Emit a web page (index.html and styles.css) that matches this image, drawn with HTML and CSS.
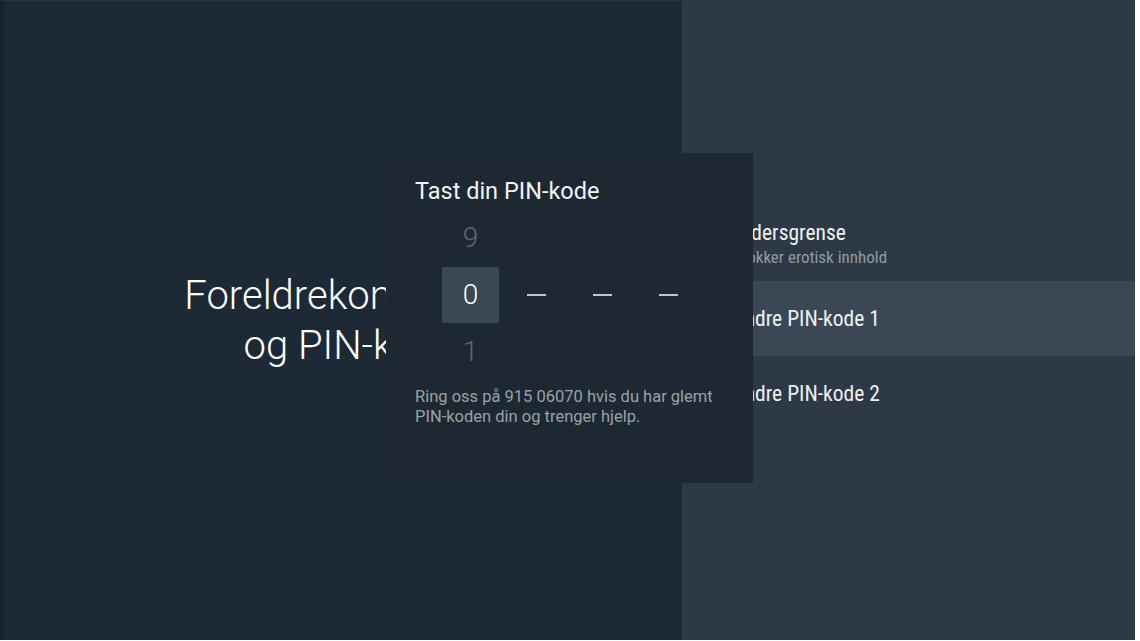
FILE: index.html
```html
<!DOCTYPE html>
<html lang="no">
<head>
<meta charset="utf-8">
<title>Foreldrekontroll og PIN-kode</title>
<link rel="stylesheet" href="styles.css">
</head>
<body>
<div class="frame">
  <div class="screen">
    <section class="guidance">
      <h1 class="guidance-title">Foreldrekontroll<br>og PIN-kode</h1>
    </section>
    <section class="actions">
      <ul class="action-list">
        <li class="action">
          <span class="action-title">Aldersgrense</span>
          <span class="action-desc">Blokker erotisk innhold</span>
        </li>
        <li class="action action-focused">
          <span class="action-title">Endre PIN-kode 1</span>
        </li>
        <li class="action">
          <span class="action-title">Endre PIN-kode 2</span>
        </li>
      </ul>
    </section>
    <div class="dialog">
      <h2 class="dialog-title">Tast din PIN-kode</h2>
      <div class="picker">
        <div class="pick-col">
          <span class="digit digit-dim">9</span>
          <span class="digit digit-active">0</span>
          <span class="digit digit-dim">1</span>
        </div>
        <div class="pick-col"><span class="dash"></span></div>
        <div class="pick-col"><span class="dash"></span></div>
        <div class="pick-col"><span class="dash"></span></div>
      </div>
      <p class="dialog-help">Ring oss på 915 06070 hvis du har glemt<br>PIN-koden din og trenger hjelp.</p>
    </div>
  </div>
</div>
</body>
</html>
```

FILE: styles.css
```css
* { box-sizing: border-box; }
html, body {
  margin: 0;
  padding: 0;
  background: #ffffff;
  font-family: Roboto, "Noto Sans", "Liberation Sans", sans-serif;
}
.frame {
  width: 1135px;
  height: 640px;
  border-left: 4px solid #17212a;
  border-top: 1px solid #2a3540;
  overflow: hidden;
}
.screen {
  position: relative;
  display: flex;
  width: 100%;
  height: 100%;
}
.guidance {
  width: 678px;
  flex: none;
  background: #1d2934;
  display: flex;
  align-items: center;
  justify-content: flex-end;
  padding-right: 224px;
}
.guidance-title {
  margin: 0;
  font-weight: 300;
  font-size: 40px;
  line-height: 50px;
  color: #ffffff;
  text-align: right;
  white-space: nowrap;
}
.actions {
  flex: 1;
  background: #2d3944;
  display: flex;
  align-items: center;
  padding-bottom: 4px;
}
.action-list {
  list-style: none;
  margin: 0;
  padding: 0;
  width: 100%;
}
.action {
  height: 75px;
  padding-left: 52px;
  display: flex;
  flex-direction: column;
  justify-content: center;
  font-family: "Roboto Condensed", Roboto, sans-serif;
}
.action-focused {
  background: #3a4855;
}
.action-title {
  font-size: 21.5px;
  line-height: 24px;
  color: #eef1f3;
}
.action-desc {
  margin-top: 2px;
  font-size: 17px;
  line-height: 20px;
  color: #929ba3;
}
.dialog {
  position: absolute;
  left: 382px;
  top: 152px;
  width: 367px;
  height: 330px;
  background: #1d2833;
  padding: 24px 0 0 29px;
}
.dialog-title {
  margin: 0;
  font-weight: 400;
  font-size: 23.5px;
  line-height: 28px;
  color: #f2f4f5;
}
.picker {
  display: flex;
  gap: 9px;
  margin: 4px 0 0 27px;
}
.pick-col {
  width: 57px;
  display: grid;
  grid-template-rows: 57px 57px 57px;
  align-items: center;
  justify-items: center;
}
.digit {
  width: 57px;
  height: 56px;
  display: flex;
  align-items: center;
  justify-content: center;
  font-weight: 300;
  font-size: 28px;
  line-height: 1;
}
.digit-dim { color: #5d6872; }
.digit-active {
  color: #ffffff;
  background: #3b4852;
  border-radius: 2px;
}
.dash {
  grid-row: 2;
  width: 19px;
  height: 2px;
  background: #c2c6ca;
}
.dialog-help {
  margin: 7px 0 0 0;
  font-size: 16.5px;
  line-height: 20px;
  color: #9ba1a7;
}
```
